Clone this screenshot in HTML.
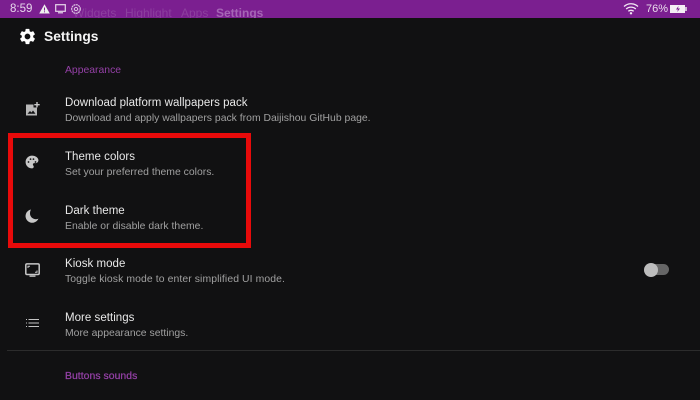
<!DOCTYPE html>
<html>
<head>
<meta charset="utf-8">
<style>
html,body{margin:0;padding:0;width:700px;height:400px;overflow:hidden;background:#111112;font-family:"Liberation Sans",sans-serif;}
.a{position:absolute;white-space:nowrap;}
.t{left:65px;font-size:11.5px;line-height:14px;color:#e8e8e8;letter-spacing:.03px;}
.s{left:65px;font-size:10.4px;line-height:12px;color:#a0a0a0;letter-spacing:.01px;}
.h{left:65px;font-size:10.4px;line-height:12px;color:#9440a6;}
.g{top:6px;font-size:12px;line-height:14px;color:#8c3f9e;}
svg{position:absolute;display:block;}
</style>
</head>
<body>
<div class="a" style="left:0;top:0;width:700px;height:18px;background:#7b1f90;overflow:hidden;">
<div class="a g" style="left:73px;">Widgets</div>
<div class="a g" style="left:125px;">Highlight</div>
<div class="a g" style="left:181px;">Apps</div>
<div class="a g" style="left:216px;font-weight:bold;color:#a565b5;">Settings</div>
</div>
<div class="a" style="left:10px;top:2px;font-size:11.5px;line-height:14px;color:#e6d6ea;">8:59</div>
<svg style="left:39px;top:4px" width="11" height="10" viewBox="0 0 11 10"><path d="M5.500 0.300L10.800 9.500H0.200Z" fill="#eee"/><rect x="5" y="3.500" width="1" height="3" fill="#7b1f90"/><rect x="5" y="7.300" width="1" height="1" fill="#7b1f90"/></svg>
<svg style="left:55px;top:4px" width="11" height="10" viewBox="0 0 11 10"><rect x=".7" y=".7" width="9.600" height="6.600" fill="none" stroke="#e6d6ea" stroke-width="1.200"/><rect x="3" y="8.200" width="5" height="1.200" fill="#e6d6ea"/></svg>
<svg style="left:70px;top:3px" width="12" height="12" viewBox="0 0 12 12"><circle cx="6" cy="6" r="4.300" fill="none" stroke="#dcc5e2" stroke-width="1.200" stroke-dasharray="2 .5"/><circle cx="6" cy="6" r="1.600" fill="none" stroke="#dcc5e2"/></svg>
<svg style="left:623px;top:2px" width="16" height="13" viewBox="0 0 16 13"><path d="M1 4.500C5 .8 11 .8 15 4.500M3.200 7C6 4.500 10 4.500 12.800 7M5.300 9.300C6.800 8 9.200 8 10.700 9.300" fill="none" stroke="#f2e8f4" stroke-width="1.300"/><circle cx="8" cy="11.300" r="1.200" fill="#f2e8f4"/></svg>
<div class="a" style="left:646px;top:2px;font-size:11px;line-height:14px;color:#eadcec;">76%</div>
<svg style="left:670px;top:4px" width="18" height="10" viewBox="0 0 18 10"><rect x="0" y="1" width="15" height="8" fill="#f4eef5"/><rect x="15" y="3" width="2" height="4" fill="#cfb5d6"/><path d="M8.500 2L6 5.500H8L7.200 8L10 4.500H8Z" fill="#7b1f90"/></svg>

<svg style="left:18px;top:27px" width="19" height="19" viewBox="0 0 24 24"><path fill="#fff" d="M19.140 12.940c.04-.3.06-.61.06-.94 0-.32-.02-.64-.07-.94l2.030-1.580c.18-.14.23-.41.12-.61l-1.920-3.320c-.12-.22-.37-.29-.59-.22l-2.390.96c-.5-.38-1.030-.7-1.620-.94l-.36-2.540c-.04-.24-.24-.41-.48-.41h-3.840c-.24 0-.43.17-.47.41l-.36 2.540c-.59.24-1.130.57-1.620.94l-2.390-.96c-.22-.08-.47 0-.59.22L2.740 8.870c-.12.21-.08.47.12.61l2.030 1.580c-.05.3-.09.63-.09.94s.02.64.07.94l-2.030 1.580c-.18.14-.23.41-.12.61l1.920 3.320c.12.22.37.29.59.22l2.390-.96c.5.38 1.030.7 1.620.94l.36 2.540c.05.24.24.41.48.41h3.840c.24 0 .44-.17.47-.41l.36-2.540c.59-.24 1.130-.56 1.620-.94l2.390.96c.22.08.47 0 .59-.22l1.920-3.320c.12-.22.07-.47-.12-.61l-2.010-1.580zM12 15.600c-1.980 0-3.600-1.620-3.600-3.600s1.620-3.600 3.600-3.600 3.600 1.620 3.600 3.600-1.620 3.600-3.600 3.600z"/></svg>
<div class="a" style="left:44px;top:28px;font-size:13.800px;line-height:17px;font-weight:bold;color:#f4f4f4;">Settings</div>

<div class="a h" style="top:65px;">Appearance</div>

<svg style="left:25px;top:101px" width="15" height="16" viewBox="0 0 15 16"><path fill="#b8b8b8" d="M1 3.500H8.500V6.500H12V14.500H1Z"/><path fill="#111112" d="M2.500 12.800L5 10L6.500 11.500L8 9.500L10.500 12.800Z"/><path fill="#c8c8c8" d="M11.300 1H12.700V3H14.700V4.400H12.700V6.400H11.300V4.400H9.300V3H11.300Z"/></svg>
<div class="a t" style="top:96px;">Download platform wallpapers pack</div>
<div class="a s" style="top:113px;">Download and apply wallpapers pack from Daijishou GitHub page.</div>

<svg style="left:25px;top:155px" width="14" height="14" viewBox="0 0 24 24"><path fill="#c8c8c8" d="M12 1C5.900 1 1 5.900 1 12s4.900 11 11 11c1.700 0 3-1.300 3-3 0-.8-.3-1.400-.8-2-.4-.5-.7-1-.7-1.600 0-1.300 1-2.400 2.400-2.400H18c2.800 0 5-2.200 5-5C23 4.800 18.100 1 12 1z"/><circle cx="6" cy="12" r="1.500" fill="#111112"/><circle cx="9.500" cy="7" r="1.500" fill="#111112"/><circle cx="14.500" cy="7" r="1.500" fill="#111112"/><circle cx="18" cy="12" r="1.500" fill="#111112"/></svg>
<div class="a t" style="top:150px;">Theme colors</div>
<div class="a s" style="top:167px;">Set your preferred theme colors.</div>

<svg style="left:25px;top:209px" width="14" height="14" viewBox="0 0 14 14"><path fill="#c8c8c8" d="M6 .5A6.700 6.700 0 1 0 13.500 9.500C12.800 10 12 10.200 11 10.200 7.800 10.200 5 7.800 5 4.500 5 3 5.300 1.600 6 .5Z"/></svg>
<div class="a t" style="top:204px;">Dark theme</div>
<div class="a s" style="top:221px;">Enable or disable dark theme.</div>

<div class="a" style="left:8px;top:133px;width:233px;height:105px;border:5px solid #e80a0a;"></div>

<svg style="left:25px;top:263px" width="15" height="15" viewBox="0 0 15 15"><rect x=".8" y=".9" width="13.400" height="10.600" rx="1.200" fill="none" stroke="#c8c8c8" stroke-width="1.500"/><rect x="4.500" y="12.500" width="6" height="1.300" fill="#c8c8c8"/><path d="M3 5V3.200H5M12 7.500V9.300H10" fill="none" stroke="#c8c8c8"/></svg>
<div class="a t" style="top:257px;">Kiosk mode</div>
<div class="a s" style="top:274px;letter-spacing:.1px;">Toggle kiosk mode to enter simplified UI mode.</div>
<div class="a" style="left:650px;top:264px;width:19px;height:11px;border-radius:5.500px;background:#666;"></div>
<div class="a" style="left:644px;top:263px;width:14px;height:14px;border-radius:50%;background:#bdbdbd;"></div>

<svg style="left:26px;top:319px" width="13" height="9" viewBox="0 0 13 9"><path fill="#c4c4c4" d="M0 0H1V1H0ZM0 3.500H1V4.500H0ZM0 7H1V8H0ZM2.500 0H13V1H2.500ZM2.500 3.500H13V4.500H2.500ZM2.500 7H13V8H2.500Z"/></svg>
<div class="a t" style="top:311px;">More settings</div>
<div class="a s" style="top:328px;">More appearance settings.</div>

<div class="a" style="left:7px;top:350px;width:693px;height:1px;background:#2c2c2c;"></div>
<div class="a h" style="top:371px;-webkit-text-stroke:.25px #9440a6;letter-spacing:.05px;">Buttons sounds</div>
</body>
</html>
